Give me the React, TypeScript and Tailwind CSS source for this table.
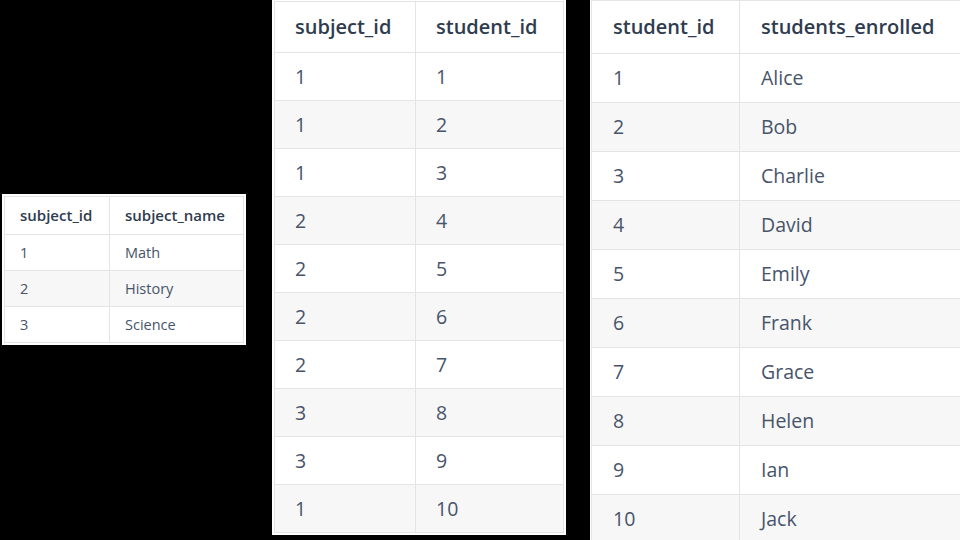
type TableProps = {
  cols: string[];
  rows: string[][];
  wrapClass: string;
  firstColClass: string;
  headClass: string;
  rowClass: string;
  cellClass: string;
};

function DataTable({ cols, rows, wrapClass, firstColClass, headClass, rowClass, cellClass }: TableProps) {
  return (
    <div className={`bg-white ${wrapClass}`}>
      <div className="border border-[#e4e4e4] flex flex-col">
        <div className={`flex bg-white font-semibold text-[#2f3c4f] ${headClass}`}>
          <div className={`border-r border-[#e4e4e4] flex items-center ${firstColClass} ${cellClass}`}>{cols[0]}</div>
          <div className={`flex-1 flex items-center ${cellClass}`}>{cols[1]}</div>
        </div>
        {rows.map((r, i) => (
          <div
            key={i}
            className={`flex border-t border-[#e4e4e4] text-[#47546a] ${rowClass} ${i % 2 === 1 ? 'bg-[#f7f7f7]' : 'bg-white'}`}
          >
            <div className={`border-r border-[#e4e4e4] flex items-center ${firstColClass} ${cellClass}`}>{r[0]}</div>
            <div className={`flex-1 flex items-center ${cellClass}`}>{r[1]}</div>
          </div>
        ))}
      </div>
    </div>
  );
}

const subjects = [
  ['1', 'Math'],
  ['2', 'History'],
  ['3', 'Science'],
];

const enrollments = [
  ['1', '1'],
  ['1', '2'],
  ['1', '3'],
  ['2', '4'],
  ['2', '5'],
  ['2', '6'],
  ['2', '7'],
  ['3', '8'],
  ['3', '9'],
  ['1', '10'],
];

const students = [
  ['1', 'Alice'],
  ['2', 'Bob'],
  ['3', 'Charlie'],
  ['4', 'David'],
  ['5', 'Emily'],
  ['6', 'Frank'],
  ['7', 'Grace'],
  ['8', 'Helen'],
  ['9', 'Ian'],
  ['10', 'Jack'],
];

export default function App() {
  return (
    <div
      className="w-[960px] h-[540px] bg-black flex items-start overflow-hidden"
      style={{ fontFamily: '"Open Sans", Lato, sans-serif' }}
    >
      <DataTable
        cols={['subject_id', 'subject_name']}
        rows={subjects}
        wrapClass="ml-[2px] mt-[194px] w-[244px] p-[2px] shrink-0"
        firstColClass="w-[105px]"
        headClass="h-[37px] text-[15px]"
        rowClass="h-[36px] text-[14.5px]"
        cellClass="pl-[15px]"
      />
      <DataTable
        cols={['subject_id', 'student_id']}
        rows={enrollments}
        wrapClass="ml-[26px] w-[294px] h-[535px] px-[2px] pt-[1px] shrink-0"
        firstColClass="w-[141px]"
        headClass="h-[50px] text-[20px]"
        rowClass="h-[48px] text-[19.5px]"
        cellClass="pl-[20px]"
      />
      <DataTable
        cols={['student_id', 'students_enrolled']}
        rows={students}
        wrapClass="ml-[24px] w-[380px] h-[540px] px-[1px] shrink-0"
        firstColClass="w-[148px]"
        headClass="h-[52px] text-[20px]"
        rowClass="h-[49px] text-[19.5px]"
        cellClass="pl-[21px]"
      />
    </div>
  );
}
